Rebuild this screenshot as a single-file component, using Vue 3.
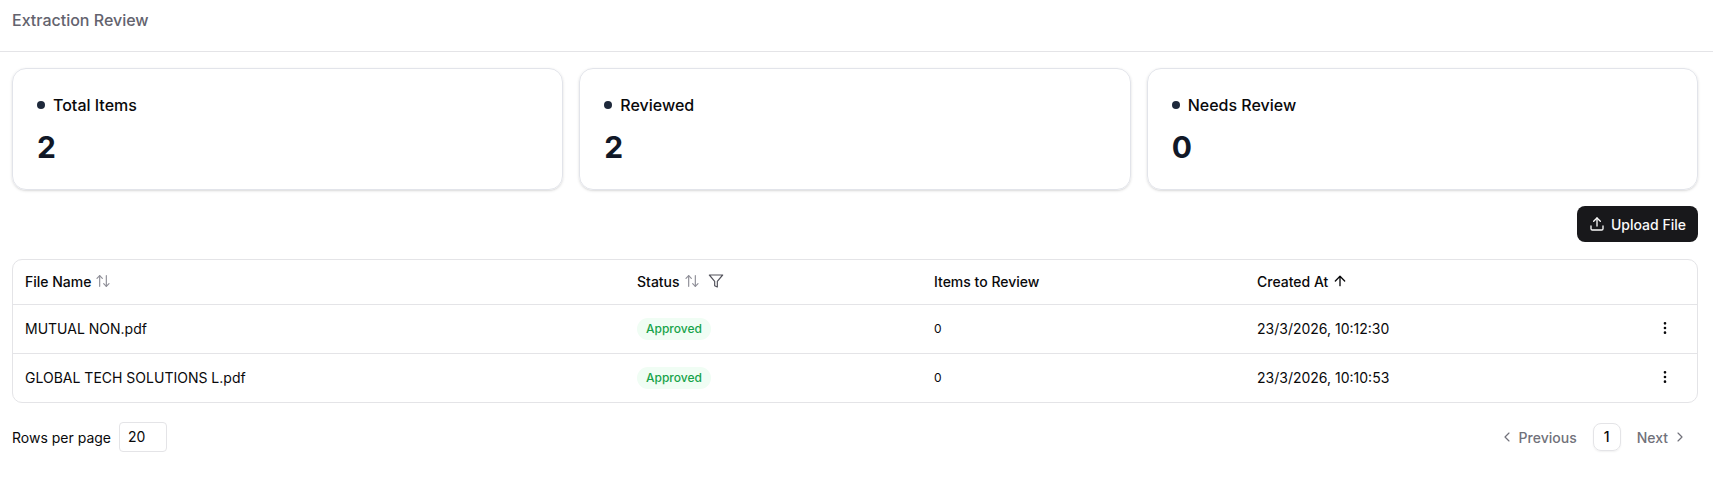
<script setup>
const cards = [
  { label: 'Total Items', value: 2 },
  { label: 'Reviewed', value: 2 },
  { label: 'Needs Review', value: 0 },
]
const rows = [
  { name: 'MUTUAL NON.pdf', status: 'Approved', items: 0, created: '23/3/2026, 10:12:30' },
  { name: 'GLOBAL TECH SOLUTIONS L.pdf', status: 'Approved', items: 0, created: '23/3/2026, 10:10:53' },
]
</script>

<template>
  <div class="page">
    <header class="topbar">Extraction Review</header>
    <main class="content">
      <section class="cards">
        <div v-for="c in cards" :key="c.label" class="card">
          <div class="card-label"><span class="dot"></span>{{ c.label }}</div>
          <div class="card-value">{{ c.value }}</div>
        </div>
      </section>

      <div class="actions">
        <button class="upload">
          <svg class="icon" viewBox="0 0 24 24"><path d="M21 15v4a2 2 0 0 1-2 2H5a2 2 0 0 1-2-2v-4" /><path d="M17 8l-5-5-5 5" /><path d="M12 3v12" /></svg>
          Upload File
        </button>
      </div>

      <div class="table-wrap">
        <table>
          <colgroup>
            <col class="c1" /><col class="c2" /><col class="c3" /><col class="c4" /><col />
          </colgroup>
          <thead>
            <tr>
              <th>
                <span class="th">File Name
                  <svg class="icon sort" viewBox="0 0 24 24"><path d="m21 16-4 4-4-4" /><path d="M17 20V4" /><path d="m3 8 4-4 4 4" /><path d="M7 4v16" /></svg>
                </span>
              </th>
              <th>
                <span class="th">Status
                  <svg class="icon sort" viewBox="0 0 24 24"><path d="m21 16-4 4-4-4" /><path d="M17 20V4" /><path d="m3 8 4-4 4 4" /><path d="M7 4v16" /></svg>
                  <svg class="icon filter" viewBox="0 0 24 24"><path d="M22 3H2l8 9.46V19l4 2v-8.54L22 3z" /></svg>
                </span>
              </th>
              <th>Items to Review</th>
              <th>
                <span class="th">Created At
                  <svg class="icon up" viewBox="0 0 24 24"><path d="m5 12 7-7 7 7" /><path d="M12 19V5" /></svg>
                </span>
              </th>
              <th></th>
            </tr>
          </thead>
          <tbody>
            <tr v-for="r in rows" :key="r.name">
              <td>{{ r.name }}</td>
              <td class="status"><span class="badge">{{ r.status }}</span></td>
              <td class="count">{{ r.items }}</td>
              <td>{{ r.created }}</td>
              <td class="menu">
                <svg class="icon more" viewBox="0 0 24 24"><circle cx="12" cy="12" r="1" /><circle cx="12" cy="5" r="1" /><circle cx="12" cy="19" r="1" /></svg>
              </td>
            </tr>
          </tbody>
        </table>
      </div>

      <footer class="pager">
        <div class="rows">
          <span>Rows per page</span>
          <span class="select">20</span>
        </div>
        <nav class="pages">
          <span class="nav">
            <svg class="icon chev" viewBox="0 0 24 24"><path d="m15 18-6-6 6-6" /></svg>
            Previous
          </span>
          <span class="page-num">1</span>
          <span class="nav">
            Next
            <svg class="icon chev" viewBox="0 0 24 24"><path d="m9 18 6-6-6-6" /></svg>
          </span>
        </nav>
      </footer>
    </main>
  </div>
</template>

<style scoped>
.page {
  font-family: Inter, "Liberation Sans", sans-serif;
  color: #09090b;
  background: #fff;
  height: 478px;
  overflow: hidden;
}
.topbar {
  height: 52px;
  box-sizing: border-box;
  padding: 8px 12px 0;
  font-size: 16px;
  line-height: 24px;
  font-weight: 500;
  color: #63636e;
  border-bottom: 1px solid #e4e4e7;
}
.content {
  padding: 16px 15px 0 12px;
}
.cards {
  display: grid;
  grid-template-columns: repeat(3, 1fr);
  gap: 16px;
}
.card {
  box-sizing: border-box;
  height: 122px;
  padding: 24px;
  border: 1px solid #e2e4ea;
  border-radius: 14px;
  box-shadow: 0 1px 3px rgba(0, 0, 0, 0.12), 0 1px 2px -1px rgba(0, 0, 0, 0.12);
}
.card-label {
  display: flex;
  align-items: center;
  gap: 8px;
  font-size: 16px;
  line-height: 24px;
  font-weight: 500;
}
.dot {
  width: 8px;
  height: 8px;
  border-radius: 50%;
  background: #1e293b;
}
.card-value {
  margin-top: 12px;
  font-size: 30px;
  line-height: 36px;
  font-weight: 700;
  color: #111827;
}
.actions {
  display: flex;
  justify-content: flex-end;
  margin-top: 16px;
}
.upload {
  display: inline-flex;
  align-items: center;
  gap: 6px;
  height: 36px;
  padding: 0 12px;
  border: 0;
  border-radius: 8px;
  background: #18181b;
  color: #fafafa;
  font-family: inherit;
  font-size: 14px;
  font-weight: 500;
}
.icon {
  width: 16px;
  height: 16px;
  fill: none;
  stroke: currentColor;
  stroke-width: 2;
  stroke-linecap: round;
  stroke-linejoin: round;
  flex: none;
}
.table-wrap {
  margin-top: 17px;
  border: 1px solid #e4e4e7;
  border-radius: 10px;
  overflow: hidden;
}
table {
  width: 100%;
  border-collapse: collapse;
  table-layout: fixed;
  font-size: 14px;
}
.c1 { width: 612px; }
.c2 { width: 297px; }
.c3 { width: 323px; }
.c4 { width: 320px; }
th {
  height: 44px;
  padding: 0 12px 1px;
  box-sizing: border-box;
  text-align: left;
  font-weight: 500;
  border-bottom: 1px solid #e4e4e7;
}
.th {
  display: inline-flex;
  align-items: center;
  gap: 4px;
}
.sort {
  color: #8f8f98;
  stroke-width: 1.75;
}
.filter {
  color: #52525b;
  margin-left: 4px;
  stroke-width: 1.75;
}
.up {
  stroke-width: 2;
}
td {
  height: 49px;
  padding: 0 12px 1px;
  box-sizing: border-box;
  border-bottom: 1px solid #e4e4e7;
}
tbody tr:last-child td {
  border-bottom: 0;
}
td.status {
  padding-bottom: 0;
}
.badge {
  display: inline-block;
  padding: 0 9px;
  border-radius: 999px;
  font-size: 12px;
  line-height: 22px;
  font-weight: 500;
  color: #16a34a;
  background: #f0fdf4;
}
.count {
  font-size: 12px;
}
.menu {
  text-align: right;
  padding-right: 24px;
  line-height: 0;
}
.pager {
  display: flex;
  justify-content: space-between;
  align-items: center;
  margin-top: 19px;
  font-size: 14px;
}
.rows {
  display: flex;
  align-items: center;
  gap: 8px;
}
.select {
  box-sizing: border-box;
  width: 48px;
  height: 30px;
  padding: 0 8px;
  line-height: 28px;
  border: 1px solid #e4e4e7;
  border-radius: 4px;
}
.pages {
  display: flex;
  align-items: center;
  gap: 16px;
  padding-right: 10px;
  color: #71717a;
  font-weight: 500;
}
.nav {
  display: inline-flex;
  align-items: center;
  gap: 4px;
}
.chev {
  stroke-width: 1.75;
}
.page-num {
  box-sizing: border-box;
  width: 28px;
  height: 28px;
  line-height: 26px;
  text-align: center;
  color: #09090b;
  border: 1px solid #e4e4e7;
  border-radius: 8px;
  box-shadow: 0 1px 2px rgba(0, 0, 0, 0.06);
}
</style>
